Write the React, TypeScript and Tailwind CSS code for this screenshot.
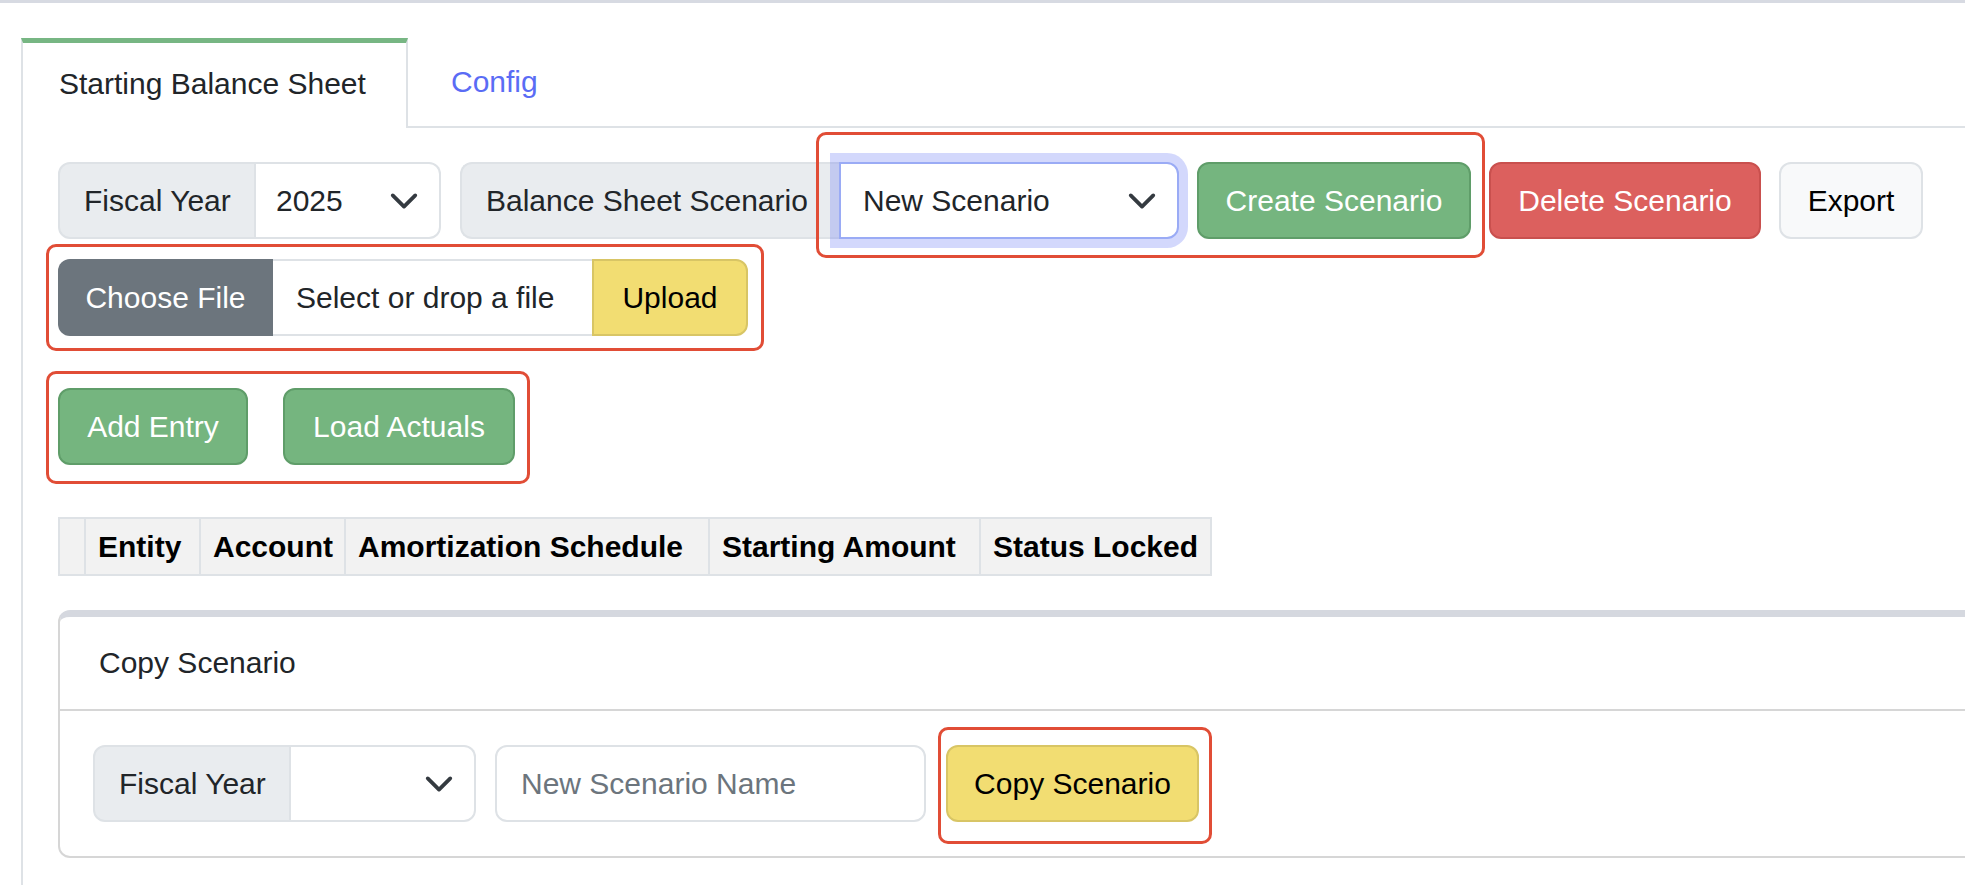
import React from "react";

function Chevron() {
  return (
    <svg width="30" height="30" viewBox="0 0 16 16" fill="none" className="shrink-0">
      <path d="m2 5 6 6 6-6" stroke="#343a40" strokeWidth="2" strokeLinecap="round" strokeLinejoin="round" />
    </svg>
  );
}

function RedBox({ className }: { className: string }) {
  return <div className={"pointer-events-none absolute rounded-[10px] border-[3px] border-[#e14d36] " + className} />;
}

export default function App() {
  return (
    <div className="relative h-[885px] w-[1965px] overflow-hidden bg-white font-['Liberation_Sans',Arial,sans-serif] text-[30px] leading-[48px] text-[#212529]">
      <div className="h-[3px] bg-[#d7dae2]" />
      <div className="pl-[21px] pt-[35px]">
        {/* tabs */}
        <div className="flex h-[90px] border-b-2 border-[#dee2e6]">
          <div className="-mb-[2px] flex h-[90px] w-[387px] items-center border-x-2 border-t-[5px] border-x-[#dee2e6] border-t-[#77b683] bg-white pb-[4px] pl-[36px] whitespace-nowrap">
            Starting Balance Sheet
          </div>
          <div className="flex items-center pl-[43px] text-[#5a6cf5]">Config</div>
        </div>

        {/* panel */}
        <div className="border-l-2 border-[#dee2e6] pb-[40px] pl-[35px] pt-[34px]">
          {/* row 1 */}
          <div className="relative flex h-[77px] gap-[18px] whitespace-nowrap">
            <div className="mr-[1px] flex">
              <div className="flex w-[198px] items-center rounded-l-[12px] border-2 border-[#dee2e6] bg-[#e9ecef] pl-[24px]">
                Fiscal Year
              </div>
              <div className="flex w-[185px] items-center justify-between rounded-r-[12px] border-2 border-l-0 border-[#dee2e6] bg-white pl-[20px] pr-[20px]">
                <span>2025</span>
                <Chevron />
              </div>
            </div>
            <div className="flex">
              <div className="flex w-[379px] items-center overflow-hidden rounded-l-[12px] border-2 border-r-0 border-[#dee2e6] bg-[#e9ecef] pl-[24px]">
                Balance Sheet Scenario
              </div>
              <div className="flex w-[340px] items-center justify-between rounded-r-[12px] border-2 border-[#9aabf5] bg-white pl-[22px] pr-[20px] shadow-[0_0_0_9px_rgba(91,110,245,0.27)]">
                <span>New Scenario</span>
                <Chevron />
              </div>
            </div>
            <div className="flex w-[274px] items-center justify-center rounded-[12px] border-2 border-[#5f9d69] bg-[#75b57f] text-white">
              Create Scenario
            </div>
            <div className="flex w-[272px] items-center justify-center rounded-[12px] border-2 border-[#c9504e] bg-[#dc605e] text-white">
              Delete Scenario
            </div>
            <div className="flex w-[144px] items-center justify-center rounded-[12px] border-2 border-[#dee2e6] bg-[#f8f9fa] text-black">
              Export
            </div>
            <RedBox className="left-[758px] -top-[30px] h-[126px] w-[669px]" />
          </div>

          {/* row 2 */}
          <div className="relative mt-[20px] flex h-[77px] whitespace-nowrap">
            <div className="flex w-[215px] items-center justify-center rounded-l-[12px] bg-[#6c757d] text-white">
              Choose File
            </div>
            <div className="flex w-[319px] items-center border-y-2 border-[#dee2e6] bg-white pl-[23px]">
              Select or drop a file
            </div>
            <div className="flex w-[156px] items-center justify-center rounded-r-[12px] border-2 border-[#d8c565] bg-[#f2dd72] text-black">
              Upload
            </div>
            <RedBox className="-left-[12px] -top-[15px] h-[107px] w-[718px]" />
          </div>

          {/* row 3 */}
          <div className="relative mt-[52px] flex h-[77px] gap-[35px] whitespace-nowrap">
            <div className="flex w-[190px] items-center justify-center rounded-[12px] border-2 border-[#5f9d69] bg-[#75b57f] text-white">
              Add Entry
            </div>
            <div className="flex w-[232px] items-center justify-center rounded-[12px] border-2 border-[#5f9d69] bg-[#75b57f] text-white">
              Load Actuals
            </div>
            <RedBox className="-left-[12px] -top-[17px] h-[113px] w-[484px]" />
          </div>

          {/* table header */}
          <div className="mt-[52px] grid h-[59px] w-[1154px] grid-cols-[26px_115px_145px_364px_271px_233px] border-y-2 border-[#dee2e6] bg-[#f2f2f2] font-bold text-black whitespace-nowrap">
            <div className="border-l-2 border-[#dee2e6]" />
            <div className="flex items-center border-l-2 border-[#dee2e6] pl-[12px]">Entity</div>
            <div className="flex items-center border-l-2 border-[#dee2e6] pl-[12px]">Account</div>
            <div className="flex items-center border-l-2 border-[#dee2e6] pl-[12px]">Amortization Schedule</div>
            <div className="flex items-center border-l-2 border-[#dee2e6] pl-[12px]">Starting Amount</div>
            <div className="flex items-center border-x-2 border-[#dee2e6] pl-[12px]">Status Locked</div>
          </div>

          {/* card */}
          <div className="mt-[34px] w-[1960px] rounded-[12px] border-2 border-t-[7px] border-[#d6d6d6] border-t-[#d5d8df]">
            <div className="flex h-[94px] items-center border-b-2 border-[#d6d6d6] pl-[39px]">Copy Scenario</div>
            <div className="flex items-center gap-[19px] py-[34px] pl-[33px] whitespace-nowrap">
              <div className="flex h-[77px]">
                <div className="flex w-[198px] items-center rounded-l-[12px] border-2 border-[#dee2e6] bg-[#e9ecef] pl-[24px]">
                  Fiscal Year
                </div>
                <div className="flex w-[185px] items-center justify-end rounded-r-[12px] border-2 border-l-0 border-[#dee2e6] bg-white pr-[20px]">
                  <Chevron />
                </div>
              </div>
              <div className="mr-[1px] flex h-[77px] w-[431px] items-center rounded-[12px] border-2 border-[#dee2e6] bg-white pl-[24px] text-[#6c757d]">
                New Scenario Name
              </div>
              <div className="relative">
                <div className="flex h-[77px] w-[253px] items-center justify-center rounded-[12px] border-2 border-[#d8c565] bg-[#f2dd72] text-black">
                  Copy Scenario
                </div>
                <RedBox className="-left-[8px] -top-[18px] h-[117px] w-[274px]" />
              </div>
            </div>
          </div>
        </div>
      </div>
    </div>
  );
}
